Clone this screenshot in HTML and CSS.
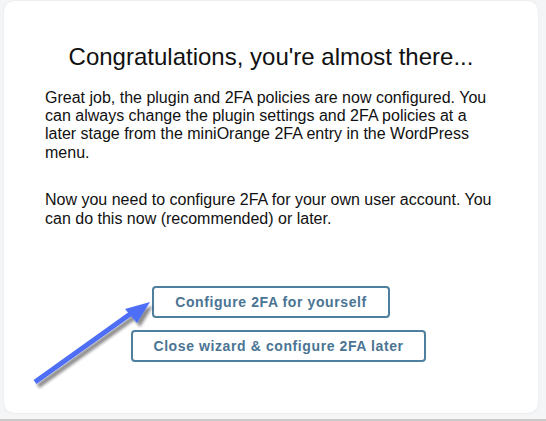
FILE: index.html
```html
<!DOCTYPE html>
<html>
<head>
<meta charset="utf-8">
<link rel="stylesheet" href="styles.css">
</head>
<body>
<div class="page">
  <div class="card">
    <h1 class="title">Congratulations, you're almost there...</h1>
    <p class="text">Great job, the plugin and 2FA policies are now configured. You can always change the plugin settings and 2FA policies at a later stage from the miniOrange 2FA entry in the WordPress menu.</p>
    <p class="text text-second">Now you need to configure 2FA for your own user account. You can do this now (recommended) or later.</p>
    <div class="actions">
      <button class="btn btn-primary">Configure 2FA for yourself</button>
      <button class="btn btn-secondary">Close wizard &amp; configure 2FA later</button>
    </div>
    <svg class="arrow" width="546" height="421" viewBox="0 0 546 421">
      <defs>
        <filter id="sh" x="-20%" y="-20%" width="140%" height="140%">
          <feDropShadow dx="3" dy="4" stdDeviation="1.6" flood-color="#000" flood-opacity="0.45"/>
        </filter>
      </defs>
      <g filter="url(#sh)">
        <line x1="35" y1="382" x2="133" y2="312" stroke="#4d6ef5" stroke-width="5" stroke-linecap="butt"/>
        <polygon points="150,302 125,309 137,323" fill="#4d6ef5"/>
      </g>
    </svg>
  </div>
  <div class="bottom-line"></div>
</div>
</body>
</html>
```
FILE: styles.css
```css
html, body {
  margin: 0;
  padding: 0;
}
body {
  background: #f4f5f7;
  font-family: "Liberation Sans", Arial, sans-serif;
  width: 546px;
  height: 421px;
  overflow: hidden;
}
.page {
  padding: 1px 8px 0 4px;
}
.card {
  position: relative;
  box-sizing: border-box;
  height: 412px;
  background: #ffffff;
  border-radius: 10px;
  box-shadow: 0 0 2px rgba(0, 0, 0, 0.10);
  padding: 42px 41px 0 41px;
}
.title {
  margin: 0;
  font-size: 24px;
  font-weight: normal;
  text-align: center;
  color: #111111;
  line-height: 27.6px;
}
.text {
  margin: 18px 0 0 0;
  font-size: 16px;
  line-height: 18.4px;
  color: #111111;
}
.text-second {
  margin-top: 29px;
}
.actions {
  display: flex;
  flex-direction: column;
  align-items: center;
  gap: 12px;
  margin-top: 58px;
}
.btn {
  box-sizing: border-box;
  height: 32px;
  background: #ffffff;
  border: 2px solid #4f7f9f;
  border-radius: 4px;
  color: #4a7494;
  font-family: "Liberation Sans", Arial, sans-serif;
  font-weight: bold;
  font-size: 14px;
  letter-spacing: 0.6px;
  padding: 0 10px;
}
.btn-primary {
  width: 238px;
}
.btn-secondary {
  width: 295px;
  margin-left: 15px;
}
.arrow {
  position: absolute;
  left: -4px;
  top: -1px;
  pointer-events: none;
}
.bottom-line {
  position: absolute;
  left: 0;
  top: 419px;
  width: 546px;
  height: 2px;
  background: #c9c9c9;
}
```
